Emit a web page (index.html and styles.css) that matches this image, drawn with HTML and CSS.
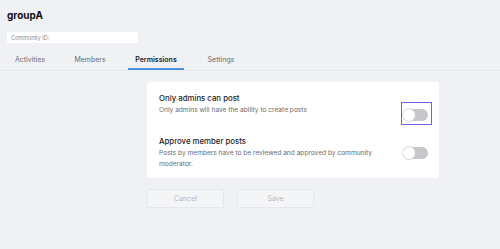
FILE: index.html
```html
<!DOCTYPE html>
<html lang="en">
    <head>
        <meta charset="UTF-8" />
        <meta name="viewport" content="width=device-width, initial-scale=1.0" />
        <title>groupA | Permissions</title>
        <link rel="stylesheet" href="styles.css">
    </head>
    <body>
        <div class="page">
            <h1 class="title">groupA</h1>
            <div class="community">
                <input type="text" placeholder="Community ID:" class="community_id" />
            </div>
            <nav class="tabs">
                <a class="tab">Activities</a>
                <a class="tab">Members</a>
                <a class="tab active">Permissions</a>
                <a class="tab">Settings</a>
            </nav>

            <div class="content">
                <div class="card">
                    <div class="row">
                        <div class="info">
                            <h3>Only admins can post</h3>
                            <p>Only admins will have the ability to create posts</p>
                        </div>
                        <div class="toggle_wrap focused">
                            <span class="toggle"></span>
                        </div>
                    </div>
                    <div class="row">
                        <div class="info">
                            <h3>Approve member posts</h3>
                            <p>Posts by members have to be reviewed and approved by community moderator.</p>
                        </div>
                        <div class="toggle_wrap">
                            <span class="toggle"></span>
                        </div>
                    </div>
                </div>
                <div class="actions">
                    <button class="button">Cancel</button>
                    <button class="button">Save</button>
                </div>
            </div>
        </div>
    </body>
</html>
```

FILE: styles.css
```css
* {
    margin: 0;
    padding: 0;
    box-sizing: border-box;
    outline: none;
    border: none;
}
body {
    background: #f0f1f4;
    font-family: 'Inter', 'Liberation Sans', sans-serif;
    color: #1c1c1e;
}
.page {
    padding: 8px 0 0;
}
.title {
    margin-left: 7px;
    font-size: 10px;
    font-weight: 700;
    line-height: 14px;
    color: #111;
}
.community {
    margin: 10px 0 0 7px;
}
.community_id {
    display: block;
    width: 131px;
    height: 11px;
    padding: 0 4px;
    border-radius: 2px;
    background: #fff;
    font-family: inherit;
    font-size: 5.5px;
    color: #888;
}
.community_id::placeholder {
    color: #8a8a8e;
}
.tabs {
    margin-top: 7px;
    display: flex;
    border-bottom: 1px solid #e7e8eb;
}
.tab {
    padding: 5px 0 4px;
    font-size: 7px;
    line-height: 9px;
    color: #6d6d72;
    text-align: center;
    border-bottom: 2px solid transparent;
}
.tab:nth-child(1) { width: 58px; margin-left: 1px; }
.tab:nth-child(2) { width: 62px; }
.tab:nth-child(3) { width: 56px; margin-left: 7px; }
.tab:nth-child(4) { width: 60px; margin-left: 7px; }
.tab.active {
    color: #1c1c1e;
    font-weight: 600;
    border-bottom-color: #4a90e2;
}
.content {
    margin: 11px 0 0 147px;
    width: 292px;
}
.card {
    background: #fff;
    border-radius: 3px;
    padding: 11px 11px 9px 12px;
}
.row {
    display: flex;
    align-items: flex-start;
    justify-content: space-between;
    gap: 20px;
}
.row + .row {
    margin-top: 11px;
}
.info h3 {
    font-size: 7.8px;
    font-weight: 500;
    line-height: 11px;
    color: #1c1c1e;
}
.info p {
    margin-top: 1px;
    font-size: 6.6px;
    line-height: 10.5px;
    color: #6b6b70;
}
.toggle_wrap {
    flex-shrink: 0;
    padding: 6px 3px 3px 1px;
    border: 1px solid transparent;
    margin: 4px -4px 0 0;
}
.toggle_wrap.focused {
    margin-top: 9px;
    border-color: #6f63dc;
}
.toggle {
    display: block;
    position: relative;
    width: 25px;
    height: 12px;
    border-radius: 6px;
    background: #c7c7cb;
}
.toggle::after {
    content: '';
    position: absolute;
    left: 0;
    top: 0;
    width: 12px;
    height: 12px;
    border-radius: 50%;
    background: #fff;
    box-shadow: 0 0 0 0.7px #cfcfd3;
}
.actions {
    margin-top: 11px;
    display: flex;
    gap: 13px;
}
.button {
    width: 77px;
    height: 19px;
    background: #f4f5f7;
    border: 1px solid #e6e7ea;
    border-radius: 2px;
    font-family: inherit;
    font-size: 7px;
    color: #b8b8bc;
}
```
